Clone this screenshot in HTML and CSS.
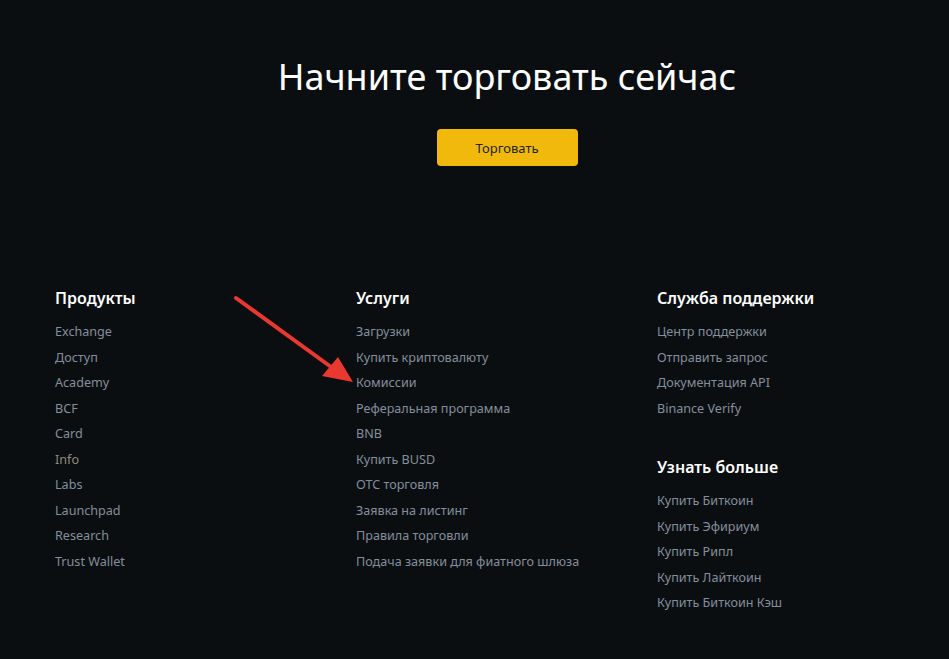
FILE: index.html
```html
<!DOCTYPE html>
<html lang="ru">
<head>
  <meta charset="UTF-8">
  <meta name="viewport" content="width=device-width, initial-scale=1.0">
  <title>Начните торговать сейчас</title>
  <link rel="stylesheet" href="styles.css">
</head>
<body>
  <section class="cta">
    <h1>Начните торговать сейчас</h1>
    <button class="trade-btn">Торговать</button>
  </section>

  <footer class="footer">
    <div class="col">
      <h3>Продукты</h3>
      <ul>
        <li><a href="#">Exchange</a></li>
        <li><a href="#">Доступ</a></li>
        <li><a href="#">Academy</a></li>
        <li><a href="#">BCF</a></li>
        <li><a href="#">Card</a></li>
        <li><a href="#" class="warm">Info</a></li>
        <li><a href="#">Labs</a></li>
        <li><a href="#">Launchpad</a></li>
        <li><a href="#">Research</a></li>
        <li><a href="#">Trust Wallet</a></li>
      </ul>
    </div>
    <div class="col">
      <h3>Услуги</h3>
      <ul>
        <li><a href="#">Загрузки</a></li>
        <li><a href="#">Купить криптовалюту</a></li>
        <li><a href="#">Комиссии</a></li>
        <li><a href="#">Реферальная программа</a></li>
        <li><a href="#">BNB</a></li>
        <li><a href="#">Купить BUSD</a></li>
        <li><a href="#">OTC торговля</a></li>
        <li><a href="#">Заявка на листинг</a></li>
        <li><a href="#">Правила торговли</a></li>
        <li><a href="#">Подача заявки для фиатного шлюза</a></li>
      </ul>
    </div>
    <div class="col">
      <h3>Служба поддержки</h3>
      <ul>
        <li><a href="#">Центр поддержки</a></li>
        <li><a href="#">Отправить запрос</a></li>
        <li><a href="#">Документация API</a></li>
        <li><a href="#">Binance Verify</a></li>
      </ul>
      <h3 class="next">Узнать больше</h3>
      <ul>
        <li><a href="#">Купить Биткоин</a></li>
        <li><a href="#">Купить Эфириум</a></li>
        <li><a href="#">Купить Рипл</a></li>
        <li><a href="#">Купить Лайткоин</a></li>
        <li><a href="#">Купить Биткоин Кэш</a></li>
      </ul>
    </div>
  </footer>

  <!-- red annotation arrow -->
  <svg class="arrow" width="949" height="659" viewBox="0 0 949 659">
    <line x1="236" y1="298" x2="338" y2="372" stroke="#e8382f" stroke-width="4" stroke-linecap="round"/>
    <polygon points="353,382 322,376 338,357" fill="#e8382f"/>
  </svg>
</body>
</html>
```

FILE: styles.css
```css
/* General */
* {
  margin: 0;
  padding: 0;
  box-sizing: border-box;
  font-family: "Noto Sans", "Open Sans", sans-serif;
}

body {
  background-color: #0b0e11;
  color: #eaecef;
  width: 949px;
  height: 659px;
  overflow: hidden;
  position: relative;
}

.cta {
  display: flex;
  flex-direction: column;
  align-items: center;
  padding: 52px 0 0 65px;
}

.cta h1 {
  font-size: 36px;
  font-weight: 400;
  line-height: 50px;
  color: #fff;
}

.trade-btn {
  margin-top: 27px;
  width: 141px;
  height: 37px;
  font-size: 13px;
  color: #1e2329;
  background-color: #f0b90b;
  border: none;
  border-radius: 4px;
  cursor: pointer;
}

.footer {
  display: grid;
  grid-template-columns: 301px 301px 1fr;
  padding: 120px 0 0 55px;
}

.col h3 {
  font-size: 16px;
  font-weight: 600;
  line-height: 24px;
  color: #fff;
  margin-bottom: 9px;
}

.col h3.next {
  margin-top: 34px;
}

.col ul {
  list-style: none;
}

.col li {
  height: 25.5px;
  line-height: 25.5px;
  font-size: 12.6px;
}

.col a {
  color: #848e9c;
  text-decoration: none;
}

.col a.warm {
  color: #8f8a7e;
}

.arrow {
  position: absolute;
  left: 0;
  top: 0;
  pointer-events: none;
}
```
